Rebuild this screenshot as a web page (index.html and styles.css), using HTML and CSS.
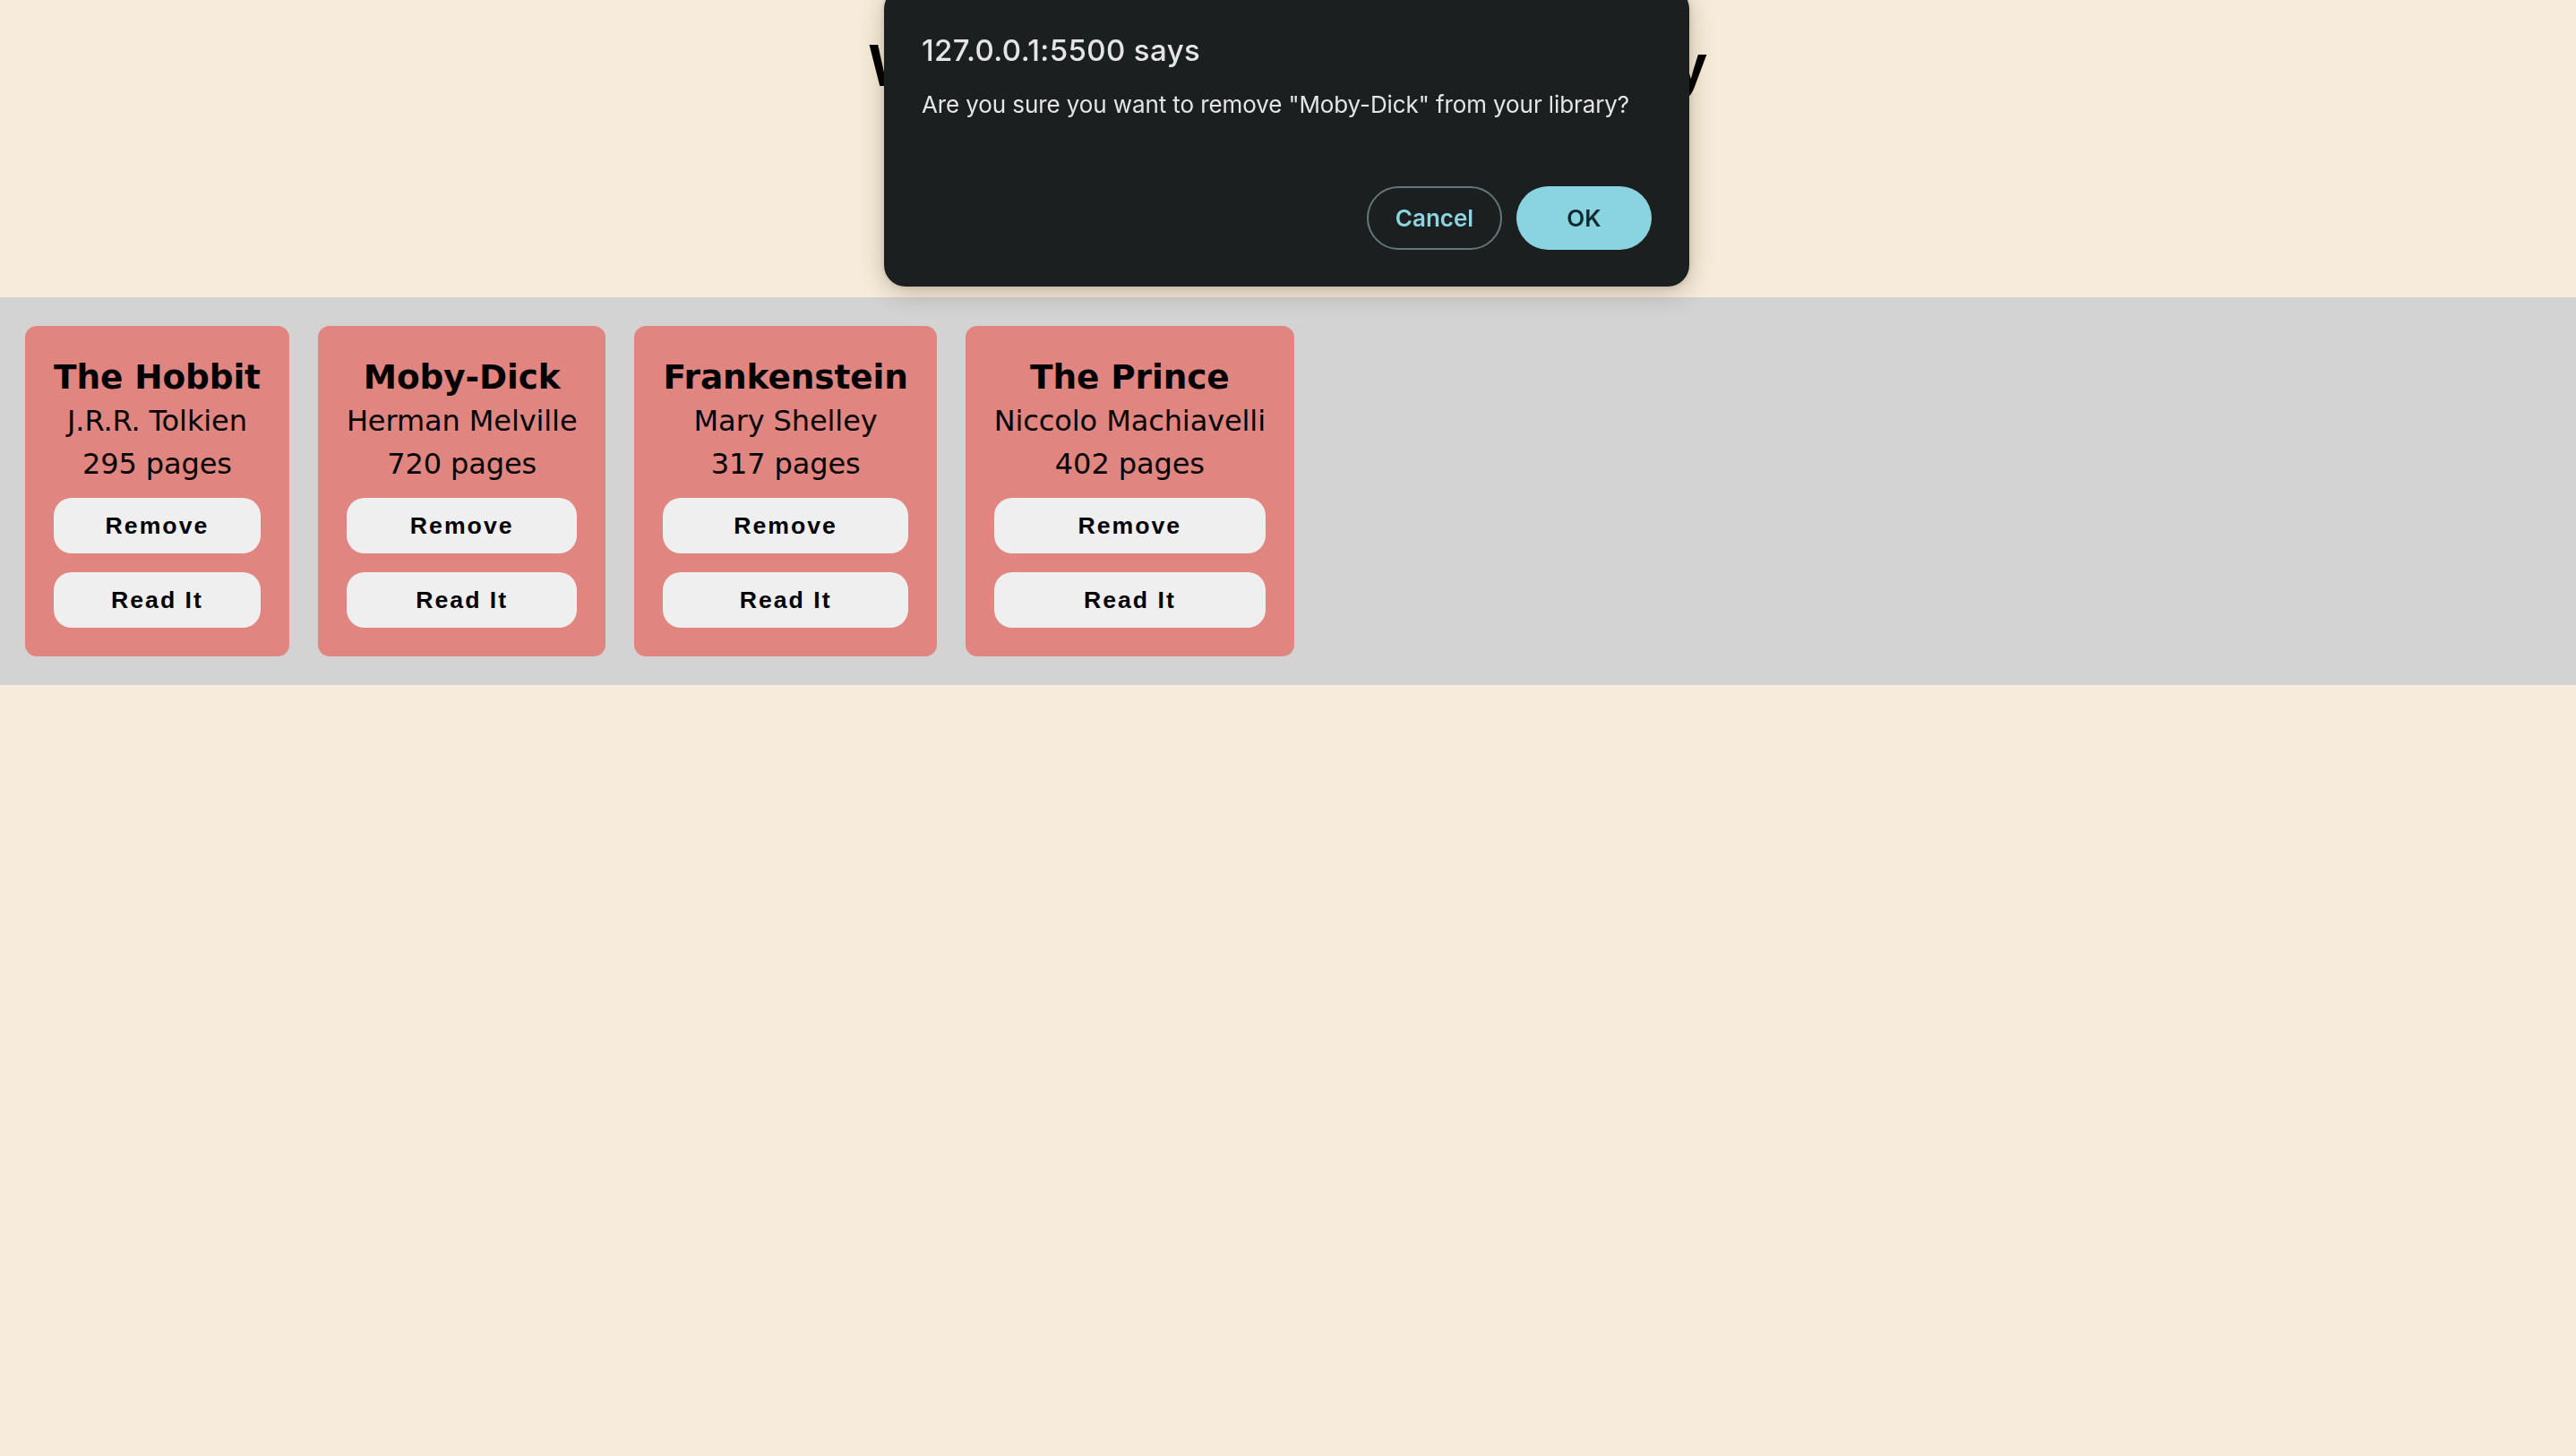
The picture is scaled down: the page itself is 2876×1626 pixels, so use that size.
FILE: index.html
```html
<!DOCTYPE html>
<html lang="en">
<head>
<meta charset="utf-8">
<title>Library</title>
<link rel="stylesheet" href="styles.css">
</head>
<body>
<header class="page-header">
  <h1 class="page-title">Welcome to Your Own Library</h1>
</header>
<main class="library">
  <div class="book">
    <h3 class="book-title">The Hobbit</h3>
    <p class="book-author">J.R.R. Tolkien</p>
    <p class="book-pages">295 pages</p>
    <button class="book-btn btn-remove">Remove</button>
    <button class="book-btn btn-read">Read It</button>
  </div>
  <div class="book">
    <h3 class="book-title">Moby-Dick</h3>
    <p class="book-author">Herman Melville</p>
    <p class="book-pages">720 pages</p>
    <button class="book-btn btn-remove">Remove</button>
    <button class="book-btn btn-read">Read It</button>
  </div>
  <div class="book">
    <h3 class="book-title">Frankenstein</h3>
    <p class="book-author">Mary Shelley</p>
    <p class="book-pages">317 pages</p>
    <button class="book-btn btn-remove">Remove</button>
    <button class="book-btn btn-read">Read It</button>
  </div>
  <div class="book">
    <h3 class="book-title">The Prince</h3>
    <p class="book-author">Niccolo Machiavelli</p>
    <p class="book-pages">402 pages</p>
    <button class="book-btn btn-remove">Remove</button>
    <button class="book-btn btn-read">Read It</button>
  </div>
</main>

<div class="alert" role="alertdialog">
  <div class="alert-title">127.0.0.1:5500 says</div>
  <div class="alert-msg">Are you sure you want to remove "Moby-Dick" from your library?</div>
  <div class="alert-actions">
    <button class="alert-btn alert-cancel">Cancel</button>
    <button class="alert-btn alert-ok">OK</button>
  </div>
</div>
</body>
</html>
```

FILE: styles.css
```css
html, body {
  margin: 0;
  padding: 0;
}

body {
  background: #f7ecdb;
  font-family: "DejaVu Sans", Verdana, sans-serif;
  font-size: 32px;
  color: #000;
  min-height: 100vh;
}

.page-header {
  height: 332px;
  box-sizing: border-box;
  padding-top: 35px;
  text-align: center;
}

.page-title {
  margin: 0;
  font-family: "Liberation Sans", Arial, sans-serif;
  font-weight: 700;
  font-size: 66px;
  line-height: 76px;
}

.library {
  background: #d3d3d3;
  display: flex;
  align-items: flex-start;
  gap: 32px;
  padding: 32px 28px;
}

.book {
  background: #e18581;
  border-radius: 13px;
  padding: 32px;
  display: flex;
  flex-direction: column;
  align-items: stretch;
  text-align: center;
}

.book-title {
  margin: 0;
  font-size: 37.44px;
  font-weight: 700;
  line-height: 50px;
  letter-spacing: -0.1px;
  white-space: nowrap;
}

.book-author,
.book-pages {
  margin: 0;
  font-size: 32px;
  line-height: 48px;
  letter-spacing: -0.1px;
  white-space: nowrap;
}

.book-btn {
  display: block;
  width: 100%;
  border: none;
  background: #efefef;
  color: #000;
  border-radius: 20px;
  font-family: "Liberation Sans", Arial, sans-serif;
  font-weight: 700;
  font-size: 26.67px;
  letter-spacing: 2px;
  line-height: 30px;
  padding: 16px 0;
}

.btn-remove {
  margin-top: 14px;
}

.btn-read {
  margin-top: 21px;
}

.alert {
  position: fixed;
  top: -14px;
  left: 987px;
  width: 899px;
  box-sizing: border-box;
  background: #1b1f1f;
  border-radius: 24px;
  padding: 51px 42px 41px 42px;
  box-shadow: 0 6px 28px rgba(60, 40, 10, 0.28), 0 0 6px rgba(60, 40, 10, 0.15);
  font-family: Inter, "Noto Sans", sans-serif;
  color: #e3e5e6;
}

.alert-title {
  font-size: 33px;
  font-weight: 500;
  line-height: 38px;
  letter-spacing: 0.4px;
}

.alert-msg {
  margin-top: 26px;
  font-size: 26px;
  line-height: 32px;
  letter-spacing: -0.1px;
}

.alert-actions {
  display: flex;
  justify-content: flex-end;
  gap: 16px;
  margin-top: 75px;
}

.alert-btn {
  width: 151px;
  height: 71px;
  border-radius: 36px;
  font-family: Inter, "Noto Sans", sans-serif;
  font-size: 26px;
  font-weight: 600;
  padding: 0;
}

.alert-cancel {
  background: transparent;
  border: 2px solid #66767b;
  color: #8dd3e0;
}

.alert-ok {
  background: #8ad3e0;
  border: none;
  color: #0e2a30;
}
```
